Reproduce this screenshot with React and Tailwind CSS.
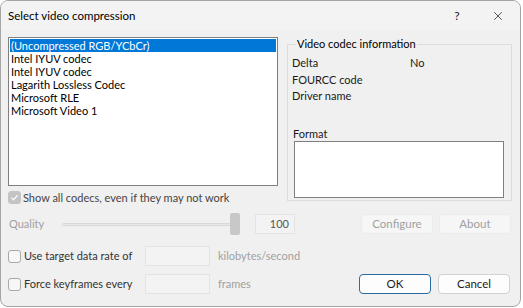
import { X } from "lucide-react";

const codecs = [
  "(Uncompressed RGB/YCbCr)",
  "Intel IYUV codec",
  "Intel IYUV codec",
  "Lagarith Lossless Codec",
  "Microsoft RLE",
  "Microsoft Video 1",
];

function CheckBox({ checked }) {
  return (
    <span
      className={`flex h-[13px] w-[13px] shrink-0 items-center justify-center rounded-[3px] border ${
        checked ? "border-[#c4c4c4] bg-[#c4c4c4]" : "border-[#a8a8a8] bg-[#f7f7f7]"
      }`}
    >
      {checked && (
        <svg width="9" height="9" viewBox="0 0 9 9">
          <path d="M1.5 4.7 L3.6 6.7 L7.5 2.3" fill="none" stroke="#fff" strokeWidth="1.2" />
        </svg>
      )}
    </span>
  );
}

function Button({ children, disabled, primary }) {
  return (
    <div
      className={`flex h-[20px] w-[72px] items-center justify-center rounded-[4px] border text-[11.5px] ${
        disabled
          ? "border-[#ebebeb] bg-[#f6f6f6] text-[#a0a0a0]"
          : primary
          ? "border-[#2c6aa3] bg-[#fdfdfd] text-[#1a1a1a]"
          : "border-[#d2d2d2] bg-[#fdfdfd] text-[#1a1a1a]"
      }`}
    >
      {children}
    </div>
  );
}

export default function App() {
  return (
    <div className="h-[308px] w-[523px] whitespace-nowrap bg-white font-['Lato',sans-serif] text-[11px] text-[#1a1a1a]">
      <div className="flex h-[307px] w-[521px] flex-col overflow-hidden rounded-[8px] border border-[#a5a5a5] bg-[#f0f0f0]">
        {/* title bar */}
        <div className="flex h-[29px] shrink-0 items-center bg-[#f3f3f3] pl-[7px]">
          <span className="text-[11.5px] leading-[14px] text-black">Select video compression</span>
          <span className="ml-auto w-[20px] text-center text-[12px] text-[#222]">?</span>
          <X className="ml-[24px] mr-[15px]" size={14} strokeWidth={1.3} color="#222" />
        </div>

        <div className="flex flex-col px-[7px]">
          <div className="mt-[7px] flex">
            {/* left column */}
            <div className="flex w-[270px] flex-col">
              <div className="h-[149px] border border-[#7f7f7f] bg-white p-[1px]">
                {codecs.map((c, i) => (
                  <div
                    key={i}
                    className={`h-[13px] pl-[1px] leading-[13px] ${
                      i === 0 ? "bg-[#0078d7] text-white" : "text-black"
                    }`}
                  >
                    {c}
                  </div>
                ))}
              </div>
              <div className="mt-[5px] flex items-center gap-[2px]">
                <CheckBox checked />
                <span className="leading-[13px] text-[#444]">Show all codecs, even if they may not work</span>
              </div>
            </div>

            {/* codec info group */}
            <fieldset className="ml-[9px] h-[164px] w-[225px] border border-[#dcdcdc] px-[4px] pb-0">
              <legend className="ml-[4px] px-[1px] leading-[14px] text-black">Video codec information</legend>
              <div className="mt-[4px] flex leading-[16.5px]">
                <span className="w-[118px]">Delta</span>
                <span>No</span>
              </div>
              <div className="leading-[16.5px]">FOURCC code</div>
              <div className="leading-[16.5px]">Driver name</div>
              <div className="mt-[22px] pl-[1px] leading-[13px]">Format</div>
              <div className="ml-[2px] mt-[1px] h-[57px] w-[210px] border border-[#7f7f7f] bg-white" />
            </fieldset>
          </div>

          {/* quality row */}
          <div className="mt-[10px] flex h-[20px] items-center">
            <span className="w-[54px] pl-[1px] text-[#a0a0a0]">Quality</span>
            <div className="relative flex h-[22px] w-[178px] items-center">
              <div className="h-[3px] w-full rounded-full border border-[#d8d8d8] bg-[#e8e8e8]" />
              <div className="absolute right-0 top-0 h-[22px] w-[10px] rounded-[2px] bg-[#c8c8c8]" />
            </div>
            <div className="ml-[15px] flex h-[20px] w-[40px] items-center justify-end border border-[#e3e3e3] bg-[#f3f3f3] pr-[5px] text-[#555]">
              100
            </div>
            <div className="ml-[66px] flex gap-[6px]">
              <Button disabled>Configure</Button>
              <Button disabled>About</Button>
            </div>
          </div>

          {/* target data rate */}
          <div className="mt-[12px] flex h-[20px] items-center">
            <CheckBox />
            <span className="ml-[3px] w-[121px] text-[#333]">Use target data rate of</span>
            <div className="h-[20px] w-[65px] border border-[#e3e3e3] bg-[#f3f3f3]" />
            <span className="ml-[8px] text-[#a0a0a0]">kilobytes/second</span>
          </div>

          {/* keyframes */}
          <div className="mt-[8px] flex h-[20px] items-center">
            <CheckBox />
            <span className="ml-[3px] w-[121px] text-[#333]">Force keyframes every</span>
            <div className="h-[20px] w-[65px] border border-[#e3e3e3] bg-[#f3f3f3]" />
            <span className="ml-[8px] text-[#a0a0a0]">frames</span>
            <div className="ml-auto mr-[3px] flex gap-[7px]">
              <Button primary>OK</Button>
              <Button>Cancel</Button>
            </div>
          </div>
        </div>
      </div>
    </div>
  );
}
